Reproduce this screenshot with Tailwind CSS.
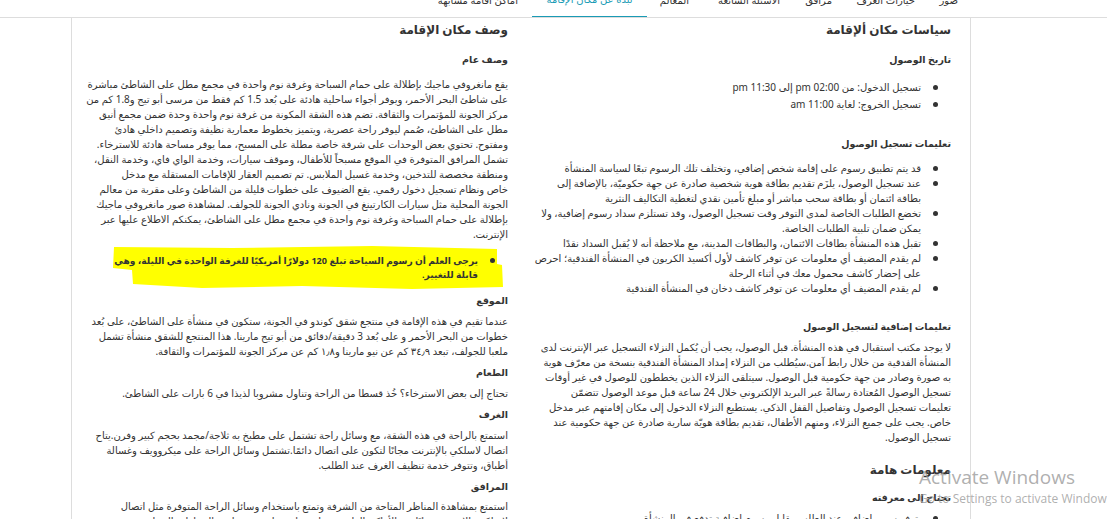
<!DOCTYPE html>
<html lang="ar" dir="rtl">
  <head>
    <meta charset="UTF-8" />
    <title>مكان الإقامة</title>
    <script src="https://cdn.jsdelivr.net/npm/@tailwindcss/browser@4"></script>
  </head>
  <body class="bg-white h-[519px] overflow-hidden relative font-['Noto_Sans','DejaVu_Sans',sans-serif] text-[#333] text-[10px] leading-[15px]">
    <!-- Tabs, scrolled half out of view -->
    <nav class="h-[18px] border-b border-[#ddd] overflow-hidden">
      <ul class="flex -mt-[18px] h-[36px] pr-[149px] text-[10px] items-center">
        <li class="w-[19px] whitespace-nowrap">صور</li>
        <li class="w-[59px] mr-[24px] whitespace-nowrap">خيارات الغرف</li>
        <li class="w-[27px] mr-[24px] whitespace-nowrap">مرافق</li>
        <li class="w-[66px] mr-[25px] whitespace-nowrap">الاسئلة الشائعة</li>
        <li class="w-[30px] mr-[25px] whitespace-nowrap">المعالم</li>
        <li class="w-[115px] mr-[12px] h-full flex items-center justify-center border-b-2 border-[#1a9bb5] text-[#1a9bb5] whitespace-nowrap">نبذة عن مكان الإقامة</li>
        <li class="w-[78px] mr-[14px] whitespace-nowrap">اماكن اقامة مشابهة</li>
      </ul>
    </nav>

    <main class="mr-[136px] ml-[71px] h-[501px] border-x border-[#ddd] flex pr-[19px] gap-[24px] overflow-hidden whitespace-nowrap">
      <!-- Policies -->
      <section class="w-[419px] shrink-0">
        <h2 class="text-[12px] leading-[20px] font-bold mt-[2px]">سياسات مكان ألإقامة</h2>
        <h3 class="text-[9.5px] font-bold mt-[12px]">تاريخ الوصول</h3>
        <ul class="pr-[30px] mt-[12px] leading-[17px] [&>li]:relative [&>li]:before:absolute [&>li]:before:-right-[17px] [&>li]:before:top-[6px] [&>li]:before:size-[5px] [&>li]:before:rounded-full [&>li]:before:bg-[#333]">
          <li>تسجيل الدخول: من pm 02:00 إلى pm 11:30</li>
          <li>تسجيل الخروج: لغاية am 11:00</li>
        </ul>
        <h3 class="text-[9.5px] font-bold mt-[23px]">تعليمات تسجيل الوصول</h3>
        <ul class="pr-[30px] mt-[10px] [&>li]:relative [&>li]:before:absolute [&>li]:before:-right-[17px] [&>li]:before:top-[5px] [&>li]:before:size-[5px] [&>li]:before:rounded-full [&>li]:before:bg-[#333]">
          <li>قد يتم تطبيق رسوم على إقامة شخص إضافي، وتختلف تلك الرسوم تبعًا لسياسة المنشأة</li>
          <li>عند تسجيل الوصول، يلزَم تقديم بطاقة هوية شخصية صادرة عن جهة حكوميّة، بالإضافة إلى<br />بطاقة ائتمان أو بطاقة سحب مباشر أو مبلغ تأمين نقدي لتغطية التكاليف النثرية</li>
          <li>تخضع الطلبات الخاصة لمدى التوفر وقت تسجيل الوصول، وقد تستلزم سداد رسوم إضافية، ولا<br />يمكن ضمان تلبية الطلبات الخاصة.</li>
          <li>تقبل هذه المنشأة بطاقات الائتمان، والبطاقات المدينة، مع ملاحظة أنه لا يُقبل السداد نقدًا</li>
          <li>لم يقدم المضيف أي معلومات عن توفر كاشف لأول أكسيد الكربون في المنشأة الفندقية؛ احرص<br />على إحضار كاشف محمول معك في أثناء الرحلة</li>
          <li>لم يقدم المضيف أي معلومات عن توفر كاشف دخان في المنشأة الفندقية</li>
        </ul>
        <h3 class="text-[9.5px] font-bold mt-[23px]">تعليمات إضافية لتسجيل الوصول</h3>
        <p class="mt-[6px]">
          لا يوجد مكتب استقبال في هذه المنشأة. قبل الوصول، يجب أن يُكمل النزلاء التسجيل عبر الإنترنت لدى<br />
          المنشأة الفدقية من خلال رابط آمن.سيُطلب من النزلاء إمداد المنشأة الفندقية بنسخة من معرّف هوية<br />
          به صورة وصادر من جهة حكومية قبل الوصول. سيتلقى النزلاء الذين يخططون للوصول في غير أوقات<br />
          تسجيل الوصول المُعتادة رسالةً عبر البريد الإلكتروني خلال 24 ساعة قبل موعد الوصول تتضمّن<br />
          تعليمات تسجيل الوصول وتفاصيل القفل الذكي. يستطيع النزلاء الدخول إلى مكان إقامتهم عبر مدخل<br />
          خاص. يجب على جميع النزلاء، ومنهم الأطفال، تقديم بطاقة هويّة سارية صادرة عن جهة حكومية عند<br />
          تسجيل الوصول.
        </p>
        <h2 class="text-[12px] leading-[20px] font-bold mt-[15px]">معلومات هامة</h2>
        <h3 class="text-[9.5px] font-bold mt-[10px]">تحتاج إلى معرفته</h3>
        <ul class="pr-[30px] mt-[6px] [&>li]:relative [&>li]:before:absolute [&>li]:before:-right-[17px] [&>li]:before:top-[5px] [&>li]:before:size-[5px] [&>li]:before:rounded-full [&>li]:before:bg-[#333]">
          <li>يتوفر سرير إضافي عند الطلب مقابل رسوم إضافية تدفع في المنشأة</li>
        </ul>
      </section>

      <!-- Description -->
      <section class="w-[416px] shrink-0">
        <h2 class="text-[12px] leading-[20px] font-bold mt-[2px]">وصف مكان الإقامة</h2>
        <h3 class="text-[9.5px] font-bold mt-[12px]">وصف عام</h3>
        <p class="mt-[10px]">
          يقع مانغروفي ماجيك بإطلالة على حمام السباحة وغرفة نوم واحدة في مجمع مطل على الشاطئ مباشرة<br />
          على شاطئ البحر الأحمر، ويوفر أجواء ساحلية هادئة على بُعد 1.5 كم فقط من مرسى أبو تيج و1.8 كم من<br />
          مركز الجونة للمؤتمرات والثقافة. تضم هذه الشقة المكونة من غرفة نوم واحدة وحدة ضمن مجمع أنيق<br />
          مطل على الشاطئ، صُمم ليوفر راحة عصرية، ويتميز بخطوط معمارية نظيفة وتصميم داخلي هادئ<br />
          ومفتوح. تحتوي بعض الوحدات على شرفة خاصة مطلة على المسبح، مما يوفر مساحة هادئة للاسترخاء.<br />
          تشمل المرافق المتوفرة في الموقع مسبحاً للأطفال، وموقف سيارات، وخدمة الواي فاي، وخدمة النقل،<br />
          ومنطقة مخصصة للتدخين، وخدمة غسيل الملابس. تم تصميم العقار للإقامات المستقلة مع مدخل<br />
          خاص ونظام تسجيل دخول رقمي. يقع الضيوف على خطوات قليلة من الشاطئ وعلى مقربة من معالم<br />
          الجونة المحلية مثل سيارات الكارتينغ في الجونة ونادي الجونة للجولف. لمشاهدة صور مانغروفي ماجيك<br />
          بإطلالة على حمام السباحة وغرفة نوم واحدة في مجمع مطل على الشاطئ، يمكنكم الاطلاع عليها عبر<br />
          الإنترنت.
        </p>
        <div class="relative mt-[12px]">
          <!-- Marker highlight -->
          <svg class="absolute top-[-8px] left-[20px] w-[392px] h-[44px]" viewBox="0 0 392 44" aria-hidden="true">
            <path fill="#ffff00" d="M2 1 L120 2 L260 0 L385 3 L385 18 L390 19 L391 41 L300 43 L190 40 L90 42 L21 38 L20 24 L1 22 Z" />
          </svg>
          <ul class="relative pr-[30px] text-[9.1px] font-bold leading-[14px] [&>li]:relative [&>li]:before:absolute [&>li]:before:-right-[17px] [&>li]:before:top-[4px] [&>li]:before:size-[5px] [&>li]:before:rounded-full [&>li]:before:bg-[#333]">
            <li>يرجى العلم أن رسوم السياحة تبلغ 120 دولارًا أمريكيًا للغرفة الواحدة في الليلة، وهي<br />قابلة للتغيير.</li>
          </ul>
        </div>
        <h3 class="text-[9.5px] font-bold mt-[11px]">الموقع</h3>
        <p class="mt-[6px]">
          عندما تقيم في هذه الإقامة في منتجع شقق كوندو في الجونة، ستكون في منشأة على الشاطئ، على بُعد<br />
          خطوات من البحر الأحمر و على بُعد 3 دقيقة/دقائق من أبو تيج مارينا. هذا المنتجع للشقق منشأة تشمل<br />
          ملعبا للجولف، تبعد ٣٤٫٩ كم عن نيو مارينا و١٫٨ كم عن مركز الجونة للمؤتمرات والثقافة.
        </p>
        <h3 class="text-[9.5px] font-bold mt-[6px]">الطعام</h3>
        <p class="mt-[6px]">تحتاج إلى بعض الاسترخاء؟ خُذ قسطا من الراحة وتناول مشروبا لذيذا في 6 بارات على الشاطئ.</p>
        <h3 class="text-[9.5px] font-bold mt-[6px]">الغرف</h3>
        <p class="mt-[6px]">
          استمتع بالراحة في هذه الشقة، مع وسائل راحة تشتمل على مطبخ به ثلاجة/مجمد بحجم كبير وفرن.يتاح<br />
          اتصال لاسلكي بالإنترنت مجانًا لتكون على اتصال دائمًا.تشتمل وسائل الراحة على ميكروويف وغسالة<br />
          أطباق، وتتوفر خدمة تنظيف الغرف عند الطلب.
        </p>
        <h3 class="text-[9.5px] font-bold mt-[6px]">المرافق</h3>
        <p class="mt-[5px]">
          استمتع بمشاهدة المناظر المتاحة من الشرفة وتمتع باستخدام وسائل الراحة المتوفرة مثل اتصال<br />
          لاسلكي بالإنترنت مجانًا في الأماكن العامة وحمام سباحة خارجي ومواقف السيارات المجانية
        </p>
      </section>
    </main>

    <!-- Windows activation watermark -->
    <div dir="ltr" class="absolute left-[919px] top-[465px] text-[#9a9a9a]/80 font-['Open_Sans',sans-serif] whitespace-nowrap pointer-events-none">
      <p class="text-[19px] leading-[24px]">Activate Windows</p>
      <p class="text-[12px] leading-[18px] mt-[1px]">Go to Settings to activate Windows.</p>
    </div>
  </body>
</html>
